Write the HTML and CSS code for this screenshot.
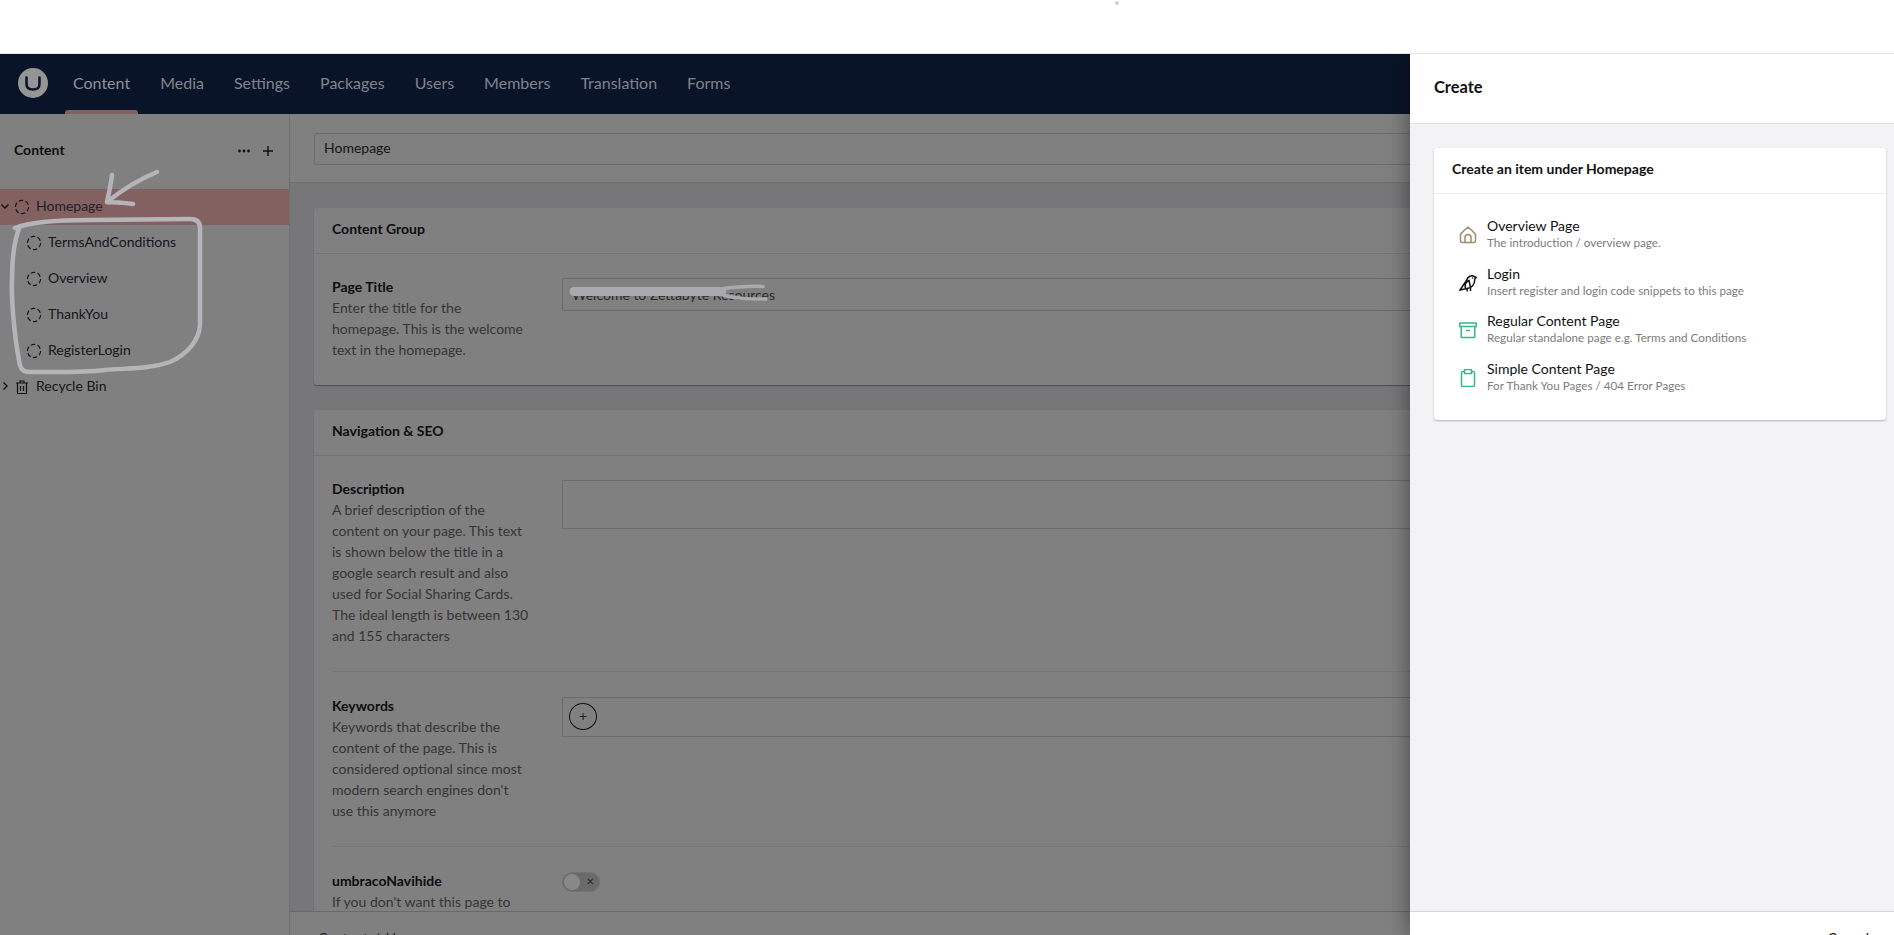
FILE: index.html
```html
<!DOCTYPE html>
<html lang="en">
<head>
<meta charset="utf-8">
<title>Content - Homepage</title>
<link rel="stylesheet" href="styles.css">
</head>
<body>
<div class="topbar"><span class="dot"></span></div>
<div class="app">
  <nav class="nav">
    <div class="logo"><svg viewBox="0 0 30 30" width="30" height="30"><path class="logo-u" d="M8.500 9.500 L8.500 16 C8.500 20 11 21.500 15 21.500 C19 21.500 21.500 20 21.500 16 L21.500 9.500"/></svg></div>
    <a class="nav-item active">Content</a>
    <a class="nav-item">Media</a>
    <a class="nav-item">Settings</a>
    <a class="nav-item">Packages</a>
    <a class="nav-item">Users</a>
    <a class="nav-item">Members</a>
    <a class="nav-item">Translation</a>
    <a class="nav-item">Forms</a>
  </nav>
  <div class="workspace">
    <aside class="sidebar">
      <div class="side-head">
        <span class="side-title">Content</span>
        <span class="side-actions">
          <svg viewBox="0 0 14 14" width="14" height="14"><circle cx="2.5" cy="7" r="1.4"/><circle cx="7" cy="7" r="1.4"/><circle cx="11.5" cy="7" r="1.4"/></svg>
          <svg class="plus" viewBox="0 0 14 14" width="14" height="14"><path d="M7 2v10M2 7h10"/></svg>
        </span>
      </div>
      <ul class="tree">
        <li class="tree-row selected">
          <svg class="caret" viewBox="0 0 10 10" width="10" height="10"><path d="M1.5 3.5 5 7l3.5-3.5"/></svg>
          <svg class="dash" viewBox="0 0 16 16" width="16" height="16"><circle cx="8" cy="8" r="6.6"/></svg>
          <span>Homepage</span>
        </li>
        <li class="tree-row child"><svg class="dash" viewBox="0 0 16 16" width="16" height="16"><circle cx="8" cy="8" r="6.6"/></svg><span>TermsAndConditions</span></li>
        <li class="tree-row child"><svg class="dash" viewBox="0 0 16 16" width="16" height="16"><circle cx="8" cy="8" r="6.6"/></svg><span>Overview</span></li>
        <li class="tree-row child"><svg class="dash" viewBox="0 0 16 16" width="16" height="16"><circle cx="8" cy="8" r="6.6"/></svg><span>ThankYou</span></li>
        <li class="tree-row child"><svg class="dash" viewBox="0 0 16 16" width="16" height="16"><circle cx="8" cy="8" r="6.6"/></svg><span>RegisterLogin</span></li>
        <li class="tree-row">
          <svg class="caret" viewBox="0 0 10 10" width="10" height="10"><path d="M3.5 1.5 7 5 3.5 8.5"/></svg>
          <svg class="trash" viewBox="0 0 16 16" width="16" height="16"><path d="M2 4h12M6 4V2h4v2M3.5 4v10.5h9V4M6.5 7v5M9.5 7v5"/></svg>
          <span>Recycle Bin</span>
        </li>
      </ul>
    </aside>
    <main class="main">
      <header class="main-head"><div class="name-input">Homepage</div></header>
      <div class="scroll">
        <section class="card">
          <h3 class="card-head">Content Group</h3>
          <div class="card-body">
            <div class="row">
              <div class="label"><b>Page Title</b><p>Enter the title for the homepage. This is the welcome text in the homepage.</p></div>
              <div class="control input-text">Welcome to Zettabyte Resources</div>
            </div>
          </div>
        </section>
        <section class="card">
          <h3 class="card-head">Navigation &amp; SEO</h3>
          <div class="card-body">
            <div class="row">
              <div class="label"><b>Description</b><p>A brief description of the content on your page. This text is shown below the title in a google search result and also used for Social Sharing Cards. The ideal length is between 130 and 155 characters</p></div>
              <div class="control textarea"></div>
            </div>
            <div class="row">
              <div class="label"><b>Keywords</b><p>Keywords that describe the content of the page. This is considered optional since most modern search engines don't use this anymore</p></div>
              <div class="control tags"><span class="add-tag">+</span></div>
            </div>
            <div class="row">
              <div class="label"><b>umbracoNavihide</b><p>If you don't want this page to appear in the navigation menus</p></div>
              <div class="toggle"><span class="knob"></span><span class="toggle-x">×</span></div>
            </div>
          </div>
        </section>
      </div>
      <footer class="main-foot">Content / Homepage</footer>
    </main>
  </div>
</div>

<aside class="drawer">
  <header class="drawer-head">Create</header>
  <div class="drawer-body">
    <section class="create-card">
      <h4 class="create-title">Create an item under Homepage</h4>
      <ul class="create-list">
        <li class="create-item">
          <svg class="ico house" viewBox="0 0 18 18" width="18" height="18"><path d="M1.5 8.5C4 5.5 6.5 3 9 1.2c2.500 1.800 5 4.300 7.500 7.300v6a2 2 0 0 1-2 2h-11a2 2 0 0 1-2-2zM6 16.500v-5a3 3 0 0 1 6 0v5"/></svg>
          <div><div class="create-name">Overview Page</div><div class="create-sub">The introduction / overview page.</div></div>
        </li>
        <li class="create-item">
          <svg class="ico bird" viewBox="0 0 18 18" width="18" height="18"><path d="M1 16 7.500 6.500C8.500 2.500 13 .5 15.500 2.800L17.300 3.500 15.700 5C16 10 13 14 8 14.500ZM6.500 14.800C5.500 10.500 7.500 7.500 10 6.500L11.500 13.500M8.200 14.500v3M11.500 13.500v3.500"/><circle class="eye" cx="13.600" cy="4" r=".8"/></svg>
          <div><div class="create-name">Login</div><div class="create-sub">Insert register and login code snippets to this page</div></div>
        </li>
        <li class="create-item">
          <svg class="ico green" viewBox="0 0 18 18" width="18" height="18"><path d="M.8 2h16.400v3.600H.8zM2.200 5.600v10.200a.8.8 0 0 0 .8.800h12a.8.8 0 0 0 .8-.8V5.600M7 9.500h4"/></svg>
          <div><div class="create-name">Regular Content Page</div><div class="create-sub">Regular standalone page e.g. Terms and Conditions</div></div>
        </li>
        <li class="create-item">
          <svg class="ico green" viewBox="0 0 18 18" width="18" height="18"><path d="M5.500 2.500H4a1.500 1.500 0 0 0-1.500 1.500v12A1.500 1.500 0 0 0 4 17.500h10a1.500 1.500 0 0 0 1.500-1.500V4A1.500 1.500 0 0 0 14 2.500h-1.500M5.500 4.500v-3a1 1 0 0 1 1-1h5a1 1 0 0 1 1 1v3z"/></svg>
          <div><div class="create-name">Simple Content Page</div><div class="create-sub">For Thank You Pages / 404 Error Pages</div></div>
        </li>
      </ul>
    </section>
  </div>
  <footer class="drawer-foot"><span>Cancel</span></footer>
</aside>

<svg class="ink" viewBox="0 0 1894 935" width="1894" height="935">
  <path d="M157 172C140 179 122 190 107 202M112 175C111 184 109 193 107 202C115 202 125 203 133 204"/>
  <path d="M15 228C30 222 55 220 90 220L190 219C197 219 200 222 200 228L200 325C199 340 188 354 170 362C150 369 130 368 105 370C80 373 50 372 30 372C22 372 20 368 19 360C15 340 11 300 12 280C12 255 14 240 20 226"/>
  <path class="wide" d="M574 291.500L722 291.500"/>
  <path class="thin" d="M720 289C735 287 750 286 763 286.500M720 294C735 299 750 299 766 299"/>
</svg>
</body>
</html>
```
FILE: styles.css
```css
* { box-sizing: border-box; }
html, body { margin: 0; padding: 0; height: 935px; overflow: hidden; background: #fff; }
body { font-family: Lato, "Open Sans", sans-serif; font-size: 14px; color: #111; }
ul { list-style: none; margin: 0; padding: 0; }
h3, h4, p { margin: 0; }

.topbar { position: relative; z-index: 2; height: 54px; background: #fff; border-bottom: 1px solid #e6e6e8; padding: 1px 0 0 1115px; }
.dot { display: block; width: 4px; height: 4px; border-radius: 50%; background: #cfcfd6; }

.app { height: 881px; display: flex; flex-direction: column; }
.nav { height: 60px; flex: none; display: flex; align-items: stretch; gap: 14px; background: #0a1428; padding-left: 18px; }
.logo { width: 30px; height: 30px; margin: 14px 3px 0 0; border-radius: 50%; background: #959595; }
.logo-u { fill: none; stroke: #0a1428; stroke-width: 2.500; stroke-linecap: round; }
.nav-item { position: relative; display: flex; align-items: center; padding: 0 8px 3px; font-size: 16px; color: #80838e; }
.nav-item.active { color: #8f9198; }
.nav-item.active::after { content: ""; position: absolute; left: 0; right: 0; bottom: 0; height: 4px; background: #7e6360; border-radius: 3px 3px 0 0; }

.workspace { flex: 1; display: flex; min-height: 0; }
.sidebar { width: 290px; flex: none; background: #808080; border-right: 1px solid #707070; }
.side-head { height: 75px; padding: 26px 14px 0 14px; display: flex; justify-content: space-between; align-items: flex-start; }
.side-title { font-weight: 700; font-size: 14px; line-height: 20px; color: #0d0d0f; }
.side-actions { display: flex; gap: 10px; padding-top: 4px; }
.side-actions svg { fill: #111; }
.plus { fill: none; stroke: #111; stroke-width: 1.4; }
.tree-row { height: 36px; display: flex; align-items: center; padding-left: 14px; padding-bottom: 3px; position: relative; color: #15151c; }
.tree-row.selected { background: #836161; color: #231d2a; }
.tree-row.child { padding-left: 26px; }
.tree-row span { margin-left: 6px; }
.tree-row svg { position: relative; top: 1px; }
.caret { fill: none; stroke: #111; stroke-width: 1.4; }
.tree-row .caret { position: absolute; left: 0; top: auto; }
.dash { fill: none; stroke: #16161c; stroke-width: 1.2; stroke-dasharray: 4.500 2.400; }
.trash { fill: none; stroke: #111; stroke-width: 1.2; }

.main { flex: 1; min-width: 0; display: flex; flex-direction: column; background: #777779; }
.main-head { height: 69px; flex: none; padding: 19px 24px 0; background: #808080; border-bottom: 1px solid #6e6e6e; }
.name-input { height: 32px; padding: 0 9px; line-height: 28px; border: 1px solid #6c6c6c; border-radius: 3px; color: #141414; }
.scroll { flex: 1; min-height: 0; overflow: hidden; padding: 25px 24px 0; display: flex; flex-direction: column; gap: 25px; }
.card { flex: none; background: #808080; border-radius: 3px; box-shadow: 0 1px 1px rgba(0,0,0,.35); }
.card-head { height: 46px; padding: 11px 18px 0; font-size: 14px; line-height: 20px; font-weight: 700; color: #0d0d0f; border-bottom: 1px solid #747474; }
.card-body { padding: 22px 18px 0; }
.row { display: grid; grid-template-columns: 230px 1fr; padding-bottom: 25px; }
.row + .row { border-top: 1px solid #777; padding-top: 23px; }
.label { width: 200px; line-height: 21px; }
.label b { font-weight: 700; color: #0d0d0f; }
.label p { color: #353535; }
.control { border: 1px solid #6c6c6c; border-radius: 1px; margin-top: 2px; }
.input-text { height: 33px; padding: 0 9px; line-height: 31px; color: #2a2a2a; }
.textarea { height: 49px; }
.tags { height: 40px; padding: 5px 6px; }
.add-tag { display: block; width: 28px; height: 27px; border: 1px solid #111; border-radius: 50%; text-align: center; line-height: 24px; color: #222; }
.toggle { position: relative; width: 38px; height: 20px; margin-top: 2px; border-radius: 10px; background: #6a6a6a; border: 1px solid #727272; }
.knob { position: absolute; left: 1px; top: 1px; width: 16px; height: 16px; border-radius: 50%; background: #888; }
.toggle-x { position: absolute; right: 5px; top: -2px; font-size: 13px; line-height: 20px; color: #1c1c1c; }
.main-foot { height: 24px; flex: none; padding: 17px 0 0 28px; overflow: hidden; background: #808080; border-top: 1px solid #6a6a6a; color: #222; line-height: 18px; white-space: nowrap; word-spacing: 2px; }

.drawer { position: absolute; z-index: 1; right: 0; top: 54px; bottom: 0; width: 484px; display: flex; flex-direction: column; background: #f3f3f5; box-shadow: 0 0 22px rgba(0,0,0,.45); }
.drawer-head { height: 70px; flex: none; padding: 23px 24px 0; background: #fff; border-bottom: 1px solid #e3e3e5; font-size: 16.400px; font-weight: 700; line-height: 20px; color: #111; }
.drawer-body { flex: 1; min-height: 0; padding: 24px 8px 0 24px; }
.create-card { height: 272px; background: #fff; border-radius: 3px; box-shadow: 0 1px 2px rgba(0,0,0,.28); }
.create-title { height: 46px; padding: 11px 18px 0; font-size: 14px; font-weight: 700; line-height: 20px; color: #111; border-bottom: 1px solid #ececee; }
.create-list { padding: 23px 0 0 25px; display: flex; flex-direction: column; }
.create-item { height: 47.670px; display: flex; align-items: flex-start; gap: 10px; }
.ico { flex: none; margin-top: 9px; fill: none; stroke-width: 1.5; }
.house { stroke: #a08d6c; }
.bird { stroke: #111; }
.eye { fill: #111; stroke: none; }
.green { stroke: #35b887; }
.create-name { font-size: 14px; line-height: 17px; color: #111; }
.create-sub { font-size: 11.700px; line-height: 16px; color: #7c7c7c; }
.drawer-foot { height: 24px; flex: none; padding: 17px 25px 0 0; overflow: hidden; background: #fff; border-top: 1px solid #d8d8da; text-align: right; line-height: 18px; color: #111; }

.ink { position: absolute; z-index: 3; left: 0; top: 0; pointer-events: none; fill: none; stroke: #b5b5b9; stroke-width: 4.500; stroke-linecap: round; stroke-linejoin: round; }
.ink .wide { stroke: #a9a9ae; stroke-width: 9; stroke-linecap: round; }
.ink .thin { stroke: #a9a9ae; stroke-width: 3.500; }
```
